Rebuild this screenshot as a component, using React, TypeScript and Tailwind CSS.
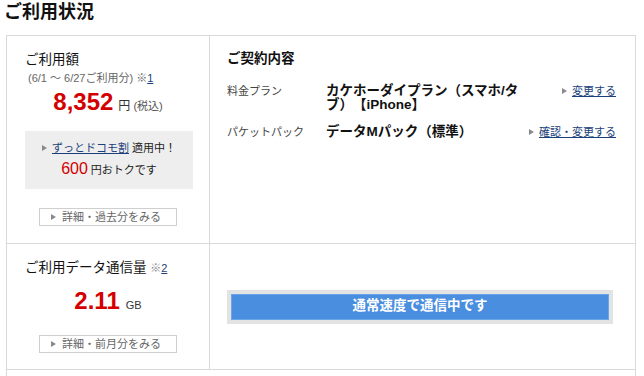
import React from 'react';

const FONT = { fontFamily: '"Liberation Sans", "Noto Sans CJK JP", sans-serif' };

const Arrow: React.FC<{ className?: string }> = ({ className = '' }) => (
  <span className={`inline-block shrink-0 w-0 h-0 border-y-[3.5px] border-y-transparent border-l-[5px] border-l-[#8a8a8a] ${className}`} />
);

const MoreButton: React.FC<{ label: string }> = ({ label }) => (
  <div className="mx-auto w-[138px] h-[18px] border border-[#cfcfcf] bg-white flex items-center pl-[11px] gap-[6px]">
    <Arrow />
    <span className="text-[11px] leading-[14px] text-[#666]">{label}</span>
  </div>
);

interface PlanRow {
  label: string;
  value: string;
  link: string;
}

const rows: PlanRow[] = [
  { label: '料金プラン', value: 'カケホーダイプラン（スマホ/タブ）【iPhone】', link: '変更する' },
  { label: 'パケットパック', value: 'データMパック（標準）', link: '確認・変更する' },
];

const App: React.FC = () => {
  return (
    <div className="w-[644px] h-[376px] overflow-hidden bg-white text-[#222] [text-spacing-trim:space-all]" style={FONT}>
      <h2 className="pl-[4px] text-[18px] leading-[25px] font-bold text-[#111] mb-[10px]">ご利用状況</h2>

      <div className="mx-[6px] w-[630px] border-x border-t border-[#d9d9d9]">
        {/* top row */}
        <div className="grid grid-cols-[203px_1fr] h-[207px]">
          <div className="border-r border-[#d9d9d9] pt-[14px]">
            <div className="pl-[18px] text-[13.5px] leading-[20px] text-[#111]">ご利用額</div>
            <div className="pl-[21px] text-[11px] leading-[16px] text-[#666]">
              (6/1 ～ 6/27ご利用分) ※<span className="text-[#1a3f7a] underline">1</span>
            </div>
            <div className="mt-[2px] flex items-baseline justify-center leading-[28px]">
              <span className="text-[24px] font-bold text-[#d40000]">8,352</span>
              <span className="ml-[5px] text-[12px] text-[#333]">円</span>
              <span className="ml-[3px] text-[11px] text-[#555]">(税込)</span>
            </div>
            <div className="mt-[11px] ml-[18px] w-[168px] h-[58px] bg-[#eeeeee] flex flex-col items-center justify-center">
              <div className="flex items-center gap-[5px] text-[11px] leading-[16px]">
                <Arrow />
                <span>
                  <span className="text-[#1a3f7a] underline">ずっとドコモ割</span>
                  <span className="text-[#222]"> 適用中！</span>
                </span>
              </div>
              <div className="mt-[3px] flex items-baseline leading-[20px]">
                <span className="text-[16px] text-[#d40000]">600</span>
                <span className="ml-[3px] text-[11px] text-[#222]">円おトクです</span>
              </div>
            </div>
            <div className="mt-[19px]">
              <MoreButton label="詳細・過去分をみる" />
            </div>
          </div>

          <div className="pt-[13px] pl-[17px] pr-[19px]">
            <div className="text-[13.5px] leading-[20px] font-bold text-[#111]">ご契約内容</div>
            {rows.map((row, i) => (
              <div key={row.label} className={`flex items-start ${i === 0 ? 'mt-[15px]' : 'mt-[13px]'}`}>
                <div className="w-[99px] shrink-0 text-[11px] leading-[14px] text-[#444]">{row.label}</div>
                <div className="w-[200px] shrink-0 text-[13.5px] leading-[14px] font-bold text-[#111]">{row.value}</div>
                <div className="flex-1 flex items-center justify-end gap-[5px] text-[11px] leading-[14px] whitespace-nowrap">
                  <Arrow />
                  <span className="text-[#1a3f7a] underline">{row.link}</span>
                </div>
              </div>
            ))}
          </div>
        </div>

        {/* data row */}
        <div className="grid grid-cols-[203px_1fr] h-[126px] border-t border-[#d9d9d9]">
          <div className="border-r border-[#d9d9d9] pt-[14px]">
            <div className="pl-[18px] text-[13.5px] leading-[20px] text-[#111]">
              ご利用データ通信量 <span className="text-[11px] text-[#888]">※</span>
              <span className="text-[11px] text-[#1a3f7a] underline">2</span>
            </div>
            <div className="mt-[9px] flex items-baseline justify-center leading-[28px]">
              <span className="text-[24px] font-bold text-[#d40000]">2.11</span>
              <span className="ml-[6px] text-[11px] text-[#333]">GB</span>
            </div>
            <div className="mt-[16px]">
              <MoreButton label="詳細・前月分をみる" />
            </div>
          </div>
          <div className="flex items-center pl-[17px] pr-[22px]">
            <div className="w-full h-[34px] bg-[#e3e3e3] p-[4px]">
              <div className="h-full bg-[#4a8ee0] border border-[#6aa5ea] flex items-center justify-center text-white text-[13.5px] font-bold">
                通常速度で通信中です
              </div>
            </div>
          </div>
        </div>

        {/* next row */}
        <div className="h-[20px] border-t border-[#d9d9d9]" />
      </div>
    </div>
  );
};

export default App;
